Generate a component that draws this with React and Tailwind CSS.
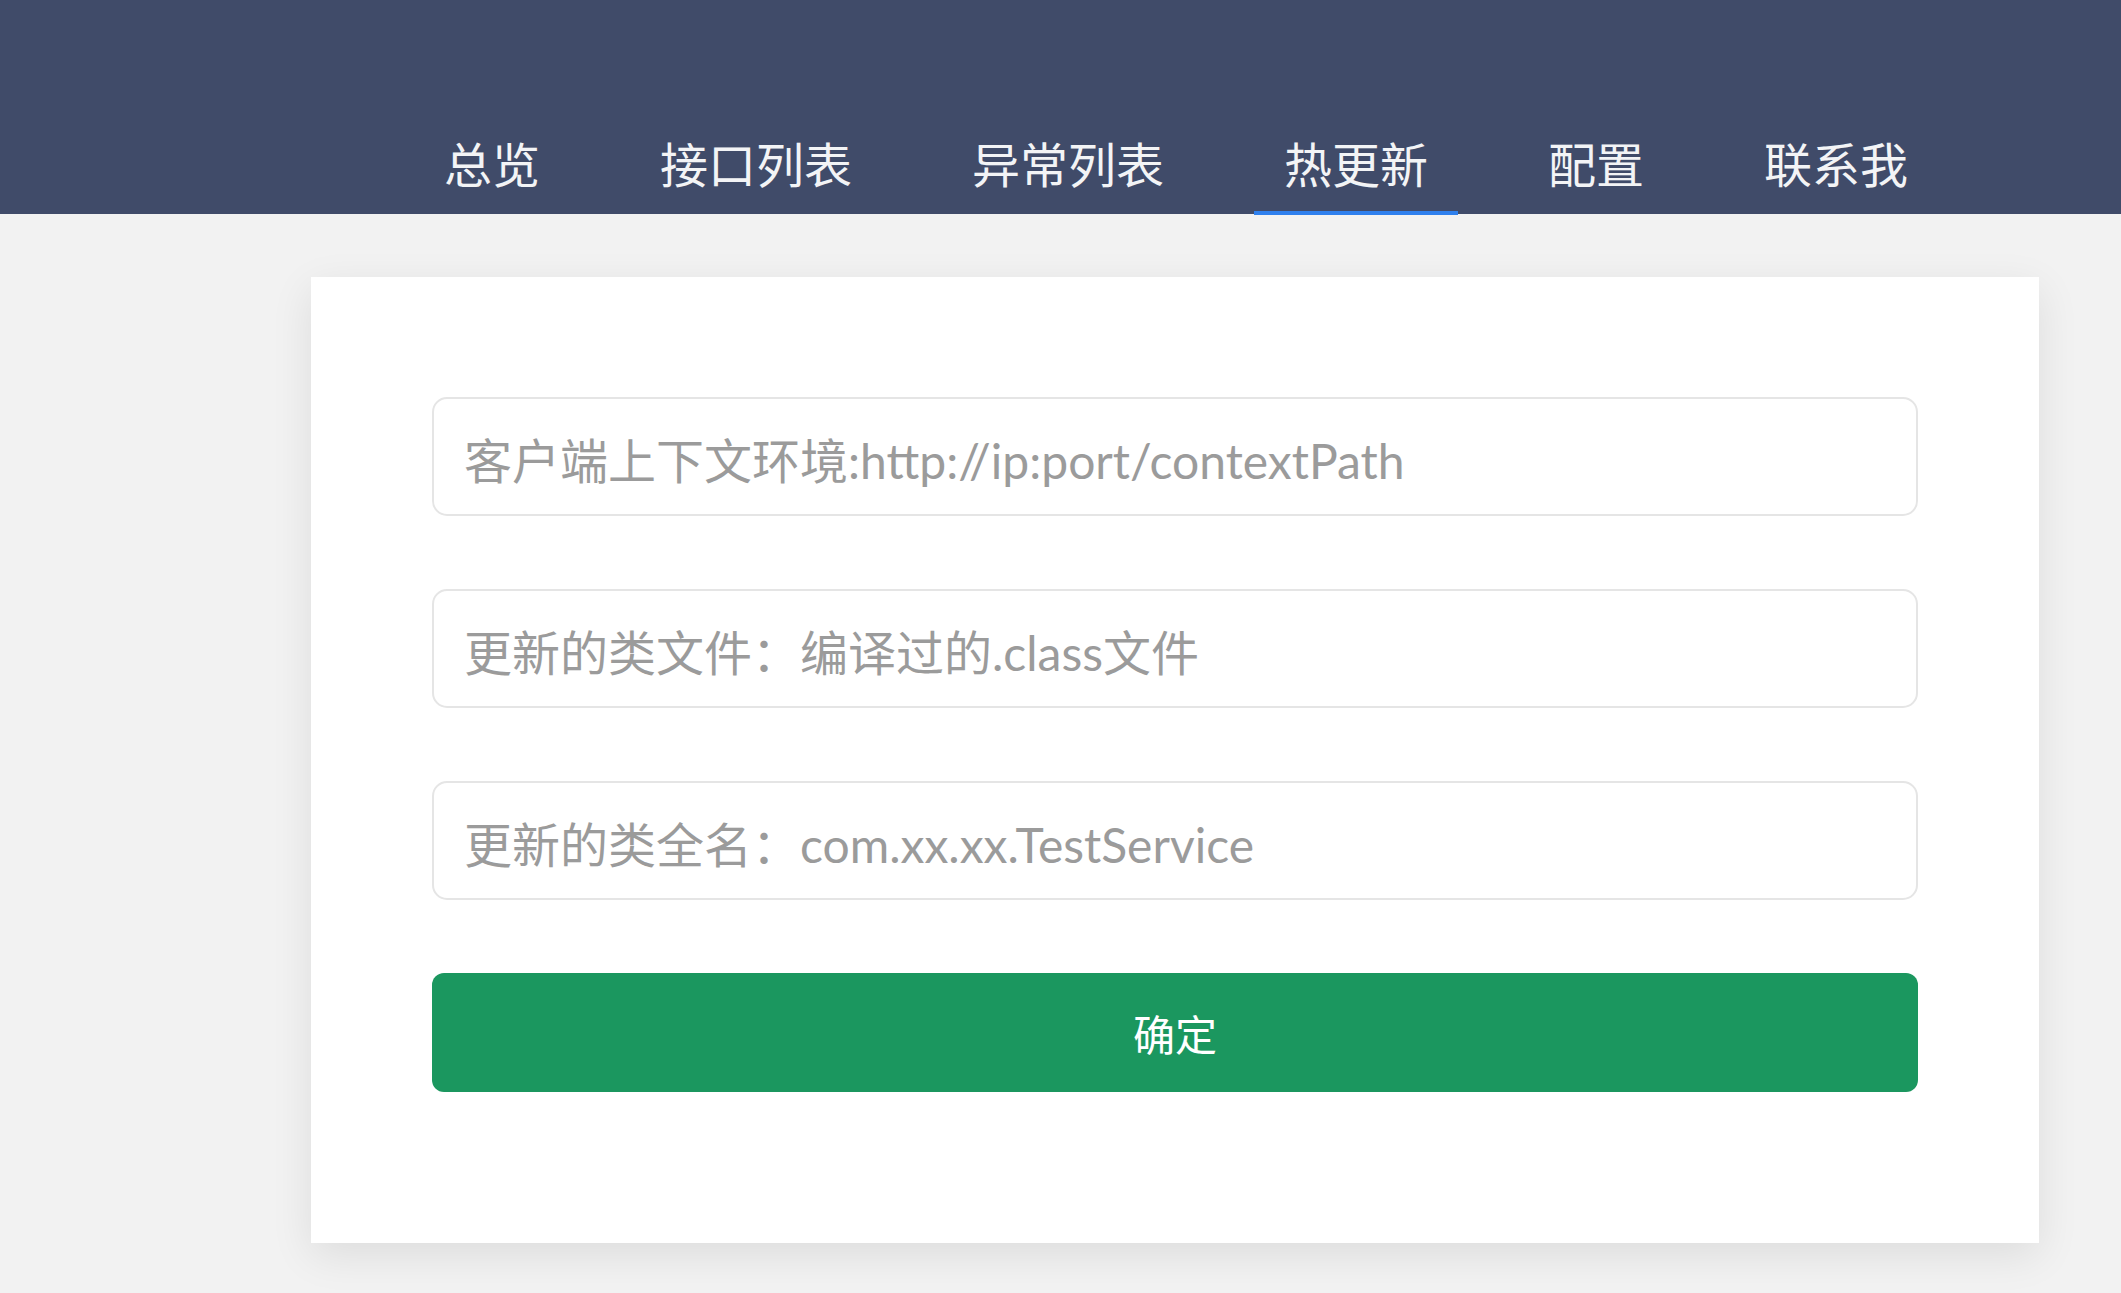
import React from "react";

const navItems = ["总览", "接口列表", "异常列表", "热更新", "配置", "联系我"];

const inputCls =
  "h-[119px] w-full rounded-[15px] border-2 border-[#e5e5e5] px-[30px] pt-[8px] text-[48px] text-[#555] outline-none placeholder:text-[#9b9b9b]";

export default function App() {
  return (
    <div
      className="min-h-[1293px] w-full bg-[#f2f2f2]"
      style={{ fontFamily: '"Noto Sans CJK SC", "Noto Sans", sans-serif' }}
    >
      <header className="h-[214px] bg-[#404b69] pt-[113px] pl-[414px]">
        <nav className="flex gap-[60px]">
          {navItems.map((item) => (
            <div
              key={item}
              className="relative h-[98px] px-[30px] text-[48px] leading-[98px] text-[#f3f4f6]"
            >
              {item}
              {item === "热更新" && (
                <span className="absolute left-0 right-0 bottom-[-4px] h-[4px] bg-[#2f80ed]" />
              )}
            </div>
          ))}
        </nav>
      </header>

      <main className="pt-[63px] pl-[311px]">
        <div className="w-[1728px] bg-white px-[121px] pt-[120px] pb-[151px] shadow-[0_12px_40px_rgba(0,0,0,0.09)]">
          <div
            className="flex flex-col gap-[73px]"
            style={{ fontFamily: 'Lato, "Noto Sans CJK SC", sans-serif' }}
          >
            <input
              className={inputCls}
              placeholder="客户端上下文环境:http://ip:port/contextPath"
            />
            <input
              className={inputCls}
              placeholder="更新的类文件：编译过的.class文件"
            />
            <input
              className={inputCls}
              placeholder="更新的类全名：com.xx.xx.TestService"
            />
            <button
              className="h-[119px] w-full rounded-[12px] bg-[#1b975f] text-[42px] text-white"
              style={{ fontFamily: '"Noto Sans CJK SC", sans-serif' }}
            >
              确定
            </button>
          </div>
        </div>
      </main>
    </div>
  );
}
